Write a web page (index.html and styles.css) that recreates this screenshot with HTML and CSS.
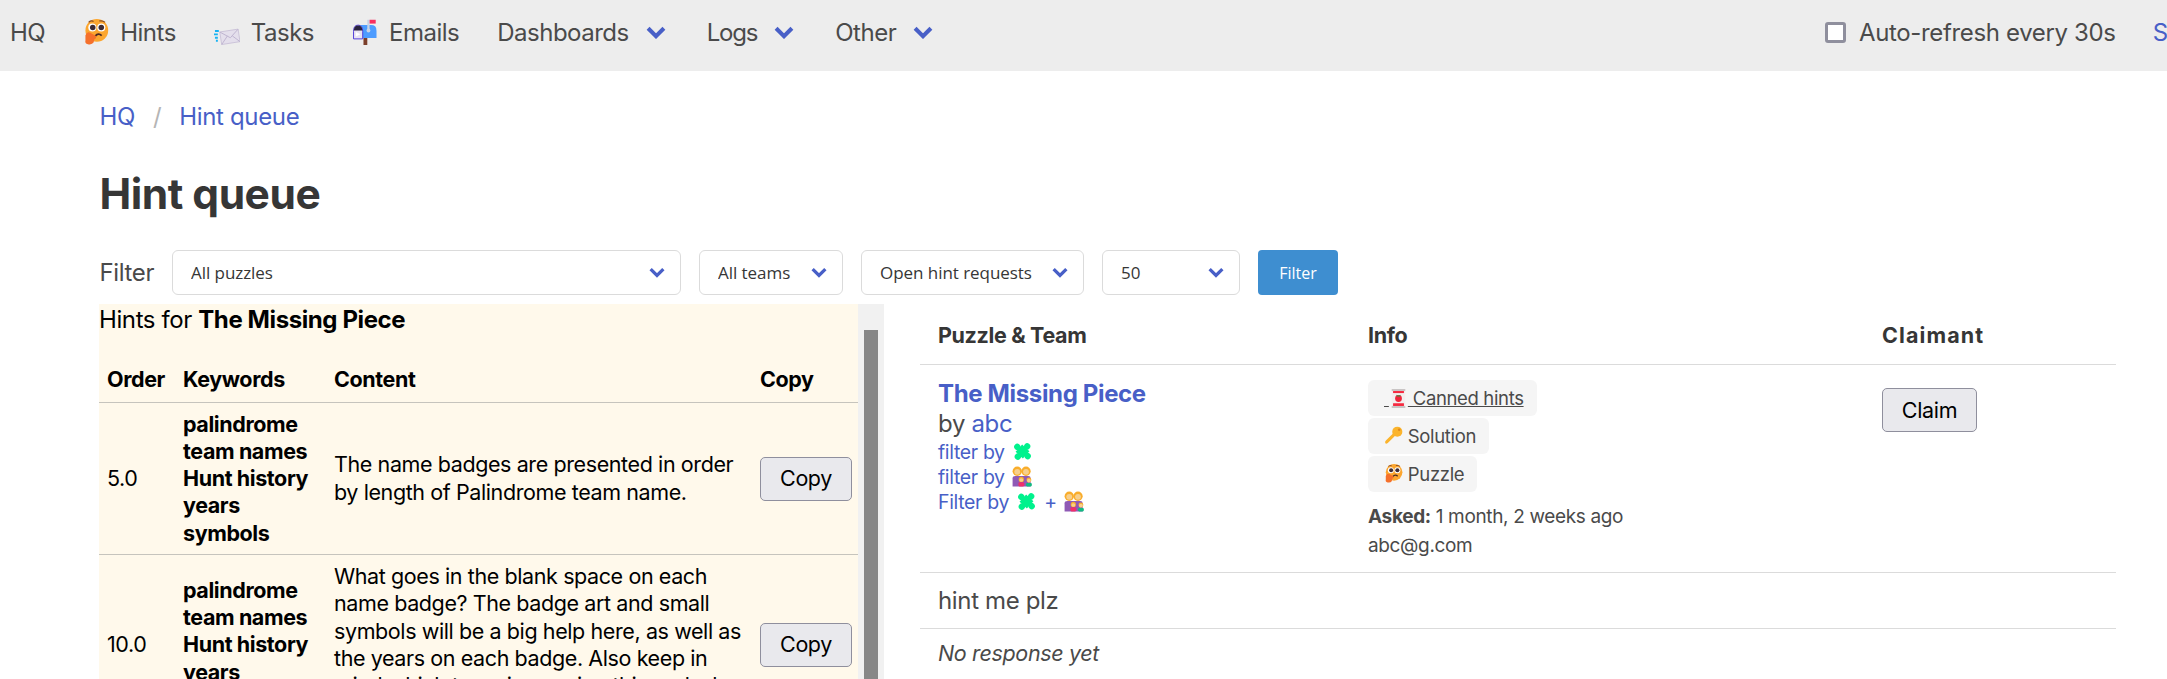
FILE: index.html
```html
<!DOCTYPE html>
<html lang="en">
<head>
<meta charset="utf-8">
<title>Hint queue</title>
<link rel="stylesheet" href="styles.css">
</head>
<body>
<svg class="sprites" aria-hidden="true">
  <symbol id="i-think" viewBox="0 0 32 32">
    <circle cx="17" cy="14" r="14" fill="#fca62f"/>
    <circle cx="11.5" cy="10.5" r="5" fill="#fff"/><circle cx="22.5" cy="10.5" r="5" fill="#fff"/>
    <circle cx="12" cy="10.5" r="3.400" fill="#3d2b35"/><circle cx="22.5" cy="10.5" r="3.400" fill="#3d2b35"/>
    <path d="M7 4 Q10 1.500 13 3M20 2.500 Q24 1.500 27 4" stroke="#8a4b20" stroke-width="1.500" fill="none"/>
    <path d="M15 21 Q19 16.500 23 20.500" stroke="#4b2a25" stroke-width="2.200" fill="none"/>
    <path d="M3 20 Q5 15 9 17 L16 21 Q17 24 14 25 L13 29 Q11 32 6 31 Q2 30 3 26 Z" fill="#f5702b"/>
  </symbol>
  <symbol id="i-mail" viewBox="0 0 27 26">
    <path d="M6 13 L25 10 L27 23 L8 26 Z" fill="#e4dfec" stroke="#cbc3d8"/>
    <path d="M6 13 L17 19 L25 10M8 26 L14 17M27 23 L19 17" stroke="#bdb3cf" fill="none"/>
    <path d="M1 12h4M0 15.500h4M1 19h3M2 22h2" stroke="#18b2f2" stroke-width="2" fill="none"/>
  </symbol>
  <symbol id="i-mailbox" viewBox="0 0 32 34">
    <rect x="14" y="24" width="5" height="10" fill="#7b3f2a"/>
    <path d="M10 8 H24 Q31 8 31 15 V25 H12 Z" fill="#4d9cff"/>
    <path d="M1 16 Q1 8 7 8 Q13 8 13 16 V26 H1 Z" fill="#e8e2f2" stroke="#4a35d8" stroke-width="1.200"/>
    <path d="M1.500 15 Q1.500 8.500 7 8.500 Q12.500 8.500 12.500 15 Z" fill="#2a2340"/>
    <path d="M4 17 L10 20 L4 23 Z" fill="#fff"/>
    <rect x="19" y="1" width="3" height="14" fill="#c9d3e6"/><circle cx="20.500" cy="15" r="2.500" fill="#c9d3e6"/>
    <rect x="22" y="1" width="8" height="5" fill="#f92f60"/>
  </symbol>
  <symbol id="i-piece" viewBox="1 1 30 30">
    <g transform="rotate(42 16 16)" fill="#00f28d">
      <rect x="9" y="9" width="14" height="14"/>
      <circle cx="16" cy="6" r="4.500"/><circle cx="26" cy="16" r="4.500"/>
      <circle cx="16" cy="26" r="4.500"/><circle cx="6" cy="16" r="4.500"/>
    </g>
  </symbol>
  <symbol id="i-family" viewBox="0 0 36 34">
    <circle cx="9" cy="8" r="8" fill="#f9ad2b"/><circle cx="24" cy="8" r="8" fill="#f9ad2b"/>
    <circle cx="9" cy="9" r="5" fill="#f7cf8d"/><circle cx="24" cy="9" r="5" fill="#f7cf8d"/>
    <path d="M1 34 V20 Q1 16 6 16 H28 Q32 16 32 20 V34 Z" fill="#8f5ab5"/>
    <circle cx="16" cy="22" r="4.500" fill="#f9ad2b"/><circle cx="16" cy="23" r="3.200" fill="#f7cf8d"/>
    <rect x="11" y="27" width="10" height="7" rx="2" fill="#ef2f6b"/>
    <circle cx="29" cy="23" r="4.200" fill="#f9ad2b"/><circle cx="29" cy="24" r="3.200" fill="#f7cf8d"/>
    <rect x="24" y="28" width="10" height="6" rx="2" fill="#12b981"/>
  </symbol>
  <symbol id="i-can" viewBox="0 0 26 28">
    <rect x="3" y="0" width="20" height="28" fill="#f3eeee"/>
    <rect x="3" y="0" width="20" height="3" fill="#c9c5c5"/>
    <rect x="3" y="25" width="20" height="3" fill="#c9c5c5"/>
    <rect x="5" y="3" width="16" height="3" fill="#f5293f"/>
    <rect x="5" y="21" width="16" height="4" fill="#f5293f"/>
    <circle cx="13" cy="14" r="5" fill="#f0243a"/>
    <path d="M9.500 8.500 L13 10 L16.500 8.500 L15 11 H11 Z" fill="#1fa349"/>
  </symbol>
  <symbol id="i-key" viewBox="0 0 30 30">
    <path d="M18 15 L6 27 Q3 29 2 27 Q1 25 3 23 L15 11 Z" fill="#fbb42c"/>
    <circle cx="21" cy="9" r="8" fill="#fbb42c"/>
    <circle cx="24" cy="6" r="2" fill="#e08a1d"/>
  </symbol>
  <symbol id="i-chev" viewBox="1.200 1 17.600 11.500">
    <path d="M3 3 L10 10 L17 3" fill="none" stroke="#485fc7" stroke-width="3.600"/>
  </symbol>
</svg>

<nav class="navbar">
  <div class="nav-start">
    <a class="nav-item nav-hq">HQ</a>
    <a class="nav-item"><svg class="nav-icon"><use href="#i-think"/></svg>Hints</a>
    <a class="nav-item"><svg class="nav-icon"><use href="#i-mail"/></svg>Tasks</a>
    <a class="nav-item"><svg class="nav-icon"><use href="#i-mailbox"/></svg>Emails</a>
    <a class="nav-item">Dashboards<svg class="nav-chev"><use href="#i-chev"/></svg></a>
    <a class="nav-item nav-tight">Logs<svg class="nav-chev"><use href="#i-chev"/></svg></a>
    <a class="nav-item">Other<svg class="nav-chev"><use href="#i-chev"/></svg></a>
  </div>
  <div class="nav-end">
    <label class="refresh"><input type="checkbox" class="refresh-box">Auto-refresh every 30s</label>
    <a class="nav-shortcut">Shortcuts</a>
  </div>
</nav>

<main class="page">
  <ul class="crumbs">
    <li><a>HQ</a></li>
    <li class="crumb-sep">/</li>
    <li><a>Hint queue</a></li>
  </ul>
  <h1 class="title">Hint queue</h1>

  <form class="filters">
    <span class="filter-label">Filter</span>
    <span class="select select-puzzles"><select><option>All puzzles</option></select><svg class="select-chev"><use href="#i-chev"/></svg></span>
    <span class="select select-teams"><select><option>All teams</option></select><svg class="select-chev"><use href="#i-chev"/></svg></span>
    <span class="select select-status"><select><option>Open hint requests</option></select><svg class="select-chev"><use href="#i-chev"/></svg></span>
    <span class="select select-count"><select><option>50</option></select><svg class="select-chev"><use href="#i-chev"/></svg></span>
    <button type="button" class="filter-btn">Filter</button>
  </form>

  <div class="columns">
    <section class="canned">
      <div class="canned-body">
        <p class="canned-title">Hints for <strong>The Missing Piece</strong></p>
        <table class="canned-table">
          <thead>
            <tr><th class="col-order">Order</th><th class="col-keys">Keywords</th><th class="col-content">Content</th><th>Copy</th></tr>
          </thead>
          <tbody>
            <tr>
              <td>5.0</td>
              <td class="keys">palindrome<br>team names<br>Hunt history<br>years<br>symbols</td>
              <td>The name badges are presented in order by length of Palindrome team name.</td>
              <td><button type="button" class="plain-btn">Copy</button></td>
            </tr>
            <tr>
              <td>10.0</td>
              <td class="keys">palindrome<br>team names<br>Hunt history<br>years<br>symbols</td>
              <td>What goes in the blank space on each name badge? The badge art and small symbols will be a big help here, as well as the years on each badge. Also keep in mind which team is wearing this and why that matters.</td>
              <td><button type="button" class="plain-btn">Copy</button></td>
            </tr>
          </tbody>
        </table>
      </div>
      <div class="scrollbar"><div class="scroll-thumb"></div></div>
    </section>

    <section class="queue">
      <table class="queue-table">
        <thead>
          <tr><th class="col-puzzle">Puzzle &amp; Team</th><th class="col-info">Info</th><th class="col-claim">Claimant</th></tr>
        </thead>
        <tbody>
          <tr>
            <td>
              <a class="puzzle-name">The Missing Piece</a>
              <div class="by">by <a>abc</a></div>
              <div class="filter-link"><a>filter by <svg class="mini"><use href="#i-piece"/></svg></a></div>
              <div class="filter-link"><a>filter by <svg class="mini"><use href="#i-family"/></svg></a></div>
              <div class="filter-link"><a>Filter by <svg class="mini"><use href="#i-piece"/></svg> + <svg class="mini"><use href="#i-family"/></svg></a></div>
            </td>
            <td>
              <div class="tag-stack">
                <span class="tag"><a class="tag-link">&nbsp;<svg class="tag-icon"><use href="#i-can"/></svg>&nbsp;Canned hints</a></span>
                <span class="tag"><svg class="tag-icon"><use href="#i-key"/></svg>&nbsp;Solution</span>
                <span class="tag"><svg class="tag-icon"><use href="#i-think"/></svg>&nbsp;Puzzle</span>
              </div>
              <div class="meta"><strong>Asked:</strong> 1 month, 2 weeks ago</div>
              <div class="meta">abc@g.com</div>
            </td>
            <td><button type="button" class="plain-btn claim-btn">Claim</button></td>
          </tr>
          <tr><td colspan="3" class="request">hint me plz</td></tr>
          <tr><td colspan="3" class="response"><em>No response yet</em></td></tr>
        </tbody>
      </table>
    </section>
  </div>
</main>
</body>
</html>
```

FILE: styles.css
```css
* { box-sizing: border-box; }

html, body {
  margin: 0;
  height: 100%;
  overflow: hidden;
}

body {
  font-family: Inter, "Noto Sans", sans-serif;
  color: #4a4a4a;
  background: #fff;
  font-size: 21.5px;
  letter-spacing: -0.35px;
}

a { color: #485fc7; }

.sprites { display: none; }

/* nav */
.navbar {
  height: 71px;
  background: #ededed;
  display: flex;
  align-items: center;
  white-space: nowrap;
  font-size: 24px;
  padding-bottom: 6px;
}

.nav-start {
  flex: 0 0 1825px;
  display: flex;
  align-items: center;
  padding-left: 10px;
  gap: 38px;
  letter-spacing: -0.5px;
}

.nav-item {
  display: flex;
  align-items: center;
  color: #4a4a4a;
}

.nav-tight { letter-spacing: -1.2px; }

.nav-icon {
  width: 26px;
  height: 26px;
  margin-right: 11px;
  margin-top: -2px;
}

.nav-chev {
  width: 20px;
  height: 13px;
  margin-left: 17px;
  margin-right: 3px;
}

.nav-end {
  flex: none;
  display: flex;
  align-items: center;
}

.refresh {
  display: flex;
  align-items: center;
}

.refresh-box {
  appearance: none;
  width: 21px;
  height: 21px;
  margin: 0 13px 0 0;
  background: #fff;
  border: 3px solid #8f8f9d;
  border-radius: 3px;
}

.nav-shortcut {
  margin-left: 37px;
  color: #485fc7;
}

/* page */
.page {
  padding: 0 51px 0 99.5px;
}

.crumbs {
  list-style: none;
  margin: 0;
  padding: 32px 0 0;
  display: flex;
  gap: 18px;
  height: 65px;
  line-height: 28px;
  font-size: 24px;
}

.crumb-sep { color: #b5b5b5; }

.title {
  margin: 39px 0 0;
  height: 75px;
  font-size: 42.5px;
  line-height: 38px;
  font-weight: 700;
  color: #363636;
  letter-spacing: -0.5px;
}

/* filters */
.filters {
  display: flex;
  align-items: stretch;
  height: 45px;
  gap: 18px;
}

.filter-label {
  align-self: center;
  font-size: 24px;
  width: 54.5px;
}

.select {
  position: relative;
  display: block;
}

.select select {
  appearance: none;
  width: 100%;
  height: 100%;
  padding: 0 0 0 18px;
  border: 1px solid #dbdbdb;
  border-radius: 6px;
  background: #fff;
  color: #363636;
  font-family: "Open Sans", sans-serif;
  font-size: 17px;
  letter-spacing: -0.05px;
}

.select-puzzles { width: 509px; }
.select-teams { width: 144px; }
.select-status { width: 223px; }
.select-count { width: 138px; }

.select-chev {
  position: absolute;
  top: 17px;
  right: 16px;
  width: 16px;
  height: 11px;
  pointer-events: none;
}

.filter-btn {
  width: 80px;
  border: 0;
  border-radius: 4px;
  background: #3e8ed0;
  color: #fff;
  font-family: "Open Sans", sans-serif;
  font-size: 16px;
}

/* columns */
.columns {
  display: grid;
  grid-template-columns: 785px 1fr;
  margin-top: 9px;
  margin-left: -0.5px;
  gap: 36px;
}

.canned {
  display: flex;
  height: 600px;
  background: #fff9eb;
  color: #000;
  letter-spacing: -0.4px;
}

.canned-body {
  flex: 0 0 759px;
  overflow: hidden;
}

.scrollbar {
  flex: 1;
  display: flex;
  padding: 26px 6px 26px;
  background: #f1f1f1;
}

.scroll-thumb {
  flex: 1;
  background: #878787;
}

.canned-title {
  margin: 0;
  height: 55px;
  line-height: 32px;
  font-size: 24px;
}

.canned-table,
.queue-table {
  width: 100%;
  border-collapse: collapse;
  table-layout: fixed;
}

.canned-table th {
  text-align: left;
  padding: 5px 8px 7px;
  line-height: 31px;
  border-bottom: 1px solid #c6c4bd;
}

.col-order { width: 76px; }
.col-keys { width: 151px; }
.col-content { width: 426px; }

.canned-table td {
  padding: 7.5px 8px;
  line-height: 27.3px;
  vertical-align: middle;
  border-bottom: 1px solid #c6c4bd;
}

.canned-table .keys { font-weight: 700; }

.plain-btn {
  width: 92px;
  height: 44px;
  background: #e9e9ed;
  border: 1px solid #8f8f9d;
  border-radius: 5px;
  color: #000;
  font: inherit;
  letter-spacing: inherit;
}

/* queue */
.queue-table th {
  text-align: left;
  color: #363636;
  padding: 0 18px;
  height: 60px;
  padding-top: 2px;
  border-bottom: 1px solid #dbdbdb;
}

.col-puzzle { width: 430px; }
.col-info { width: 514px; }
.queue-table .col-claim { letter-spacing: 1.1px; }

.queue-table td {
  padding: 15px 18px 12px;
  vertical-align: top;
  border-bottom: 1px solid #dbdbdb;
}

.puzzle-name {
  display: block;
  font-size: 24px;
  font-weight: 700;
  line-height: 28px;
}

.by {
  font-size: 24px;
  line-height: 32px;
}

.filter-link {
  font-size: 19.5px;
  line-height: 25px;
}

.mini {
  width: 21px;
  height: 21px;
  vertical-align: -3px;
  margin-left: 2px;
  margin-right: 2px;
}

.tag-stack {
  display: flex;
  flex-direction: column;
  align-items: flex-start;
  gap: 2px;
}

.tag {
  display: flex;
  align-items: center;
  height: 36px;
  padding: 0 13px 0 16px;
  background: #f5f5f5;
  border-radius: 6px;
  font-size: 18.5px;
  white-space: nowrap;
}

.tag-link {
  color: #4a4a4a;
  text-decoration: underline;
}

.tag-icon {
  width: 19px;
  height: 19px;
  vertical-align: -3px;
}

.meta {
  font-size: 19px;
  line-height: 29px;
}

.tag-stack + .meta {
  margin-top: 10px;
}

.meta strong { font-weight: 700; }

.claim-btn {
  width: 95px;
  height: 44px;
  margin-top: 8px;
  letter-spacing: -0.3px;
}

.queue-table .request {
  padding: 13px 18px 0;
  height: 56px;
  font-size: 24px;
  line-height: 30px;
}

.queue-table .response {
  padding: 11px 18px 0;
  border-bottom: 0;
  font-size: 21.5px;
}
```
